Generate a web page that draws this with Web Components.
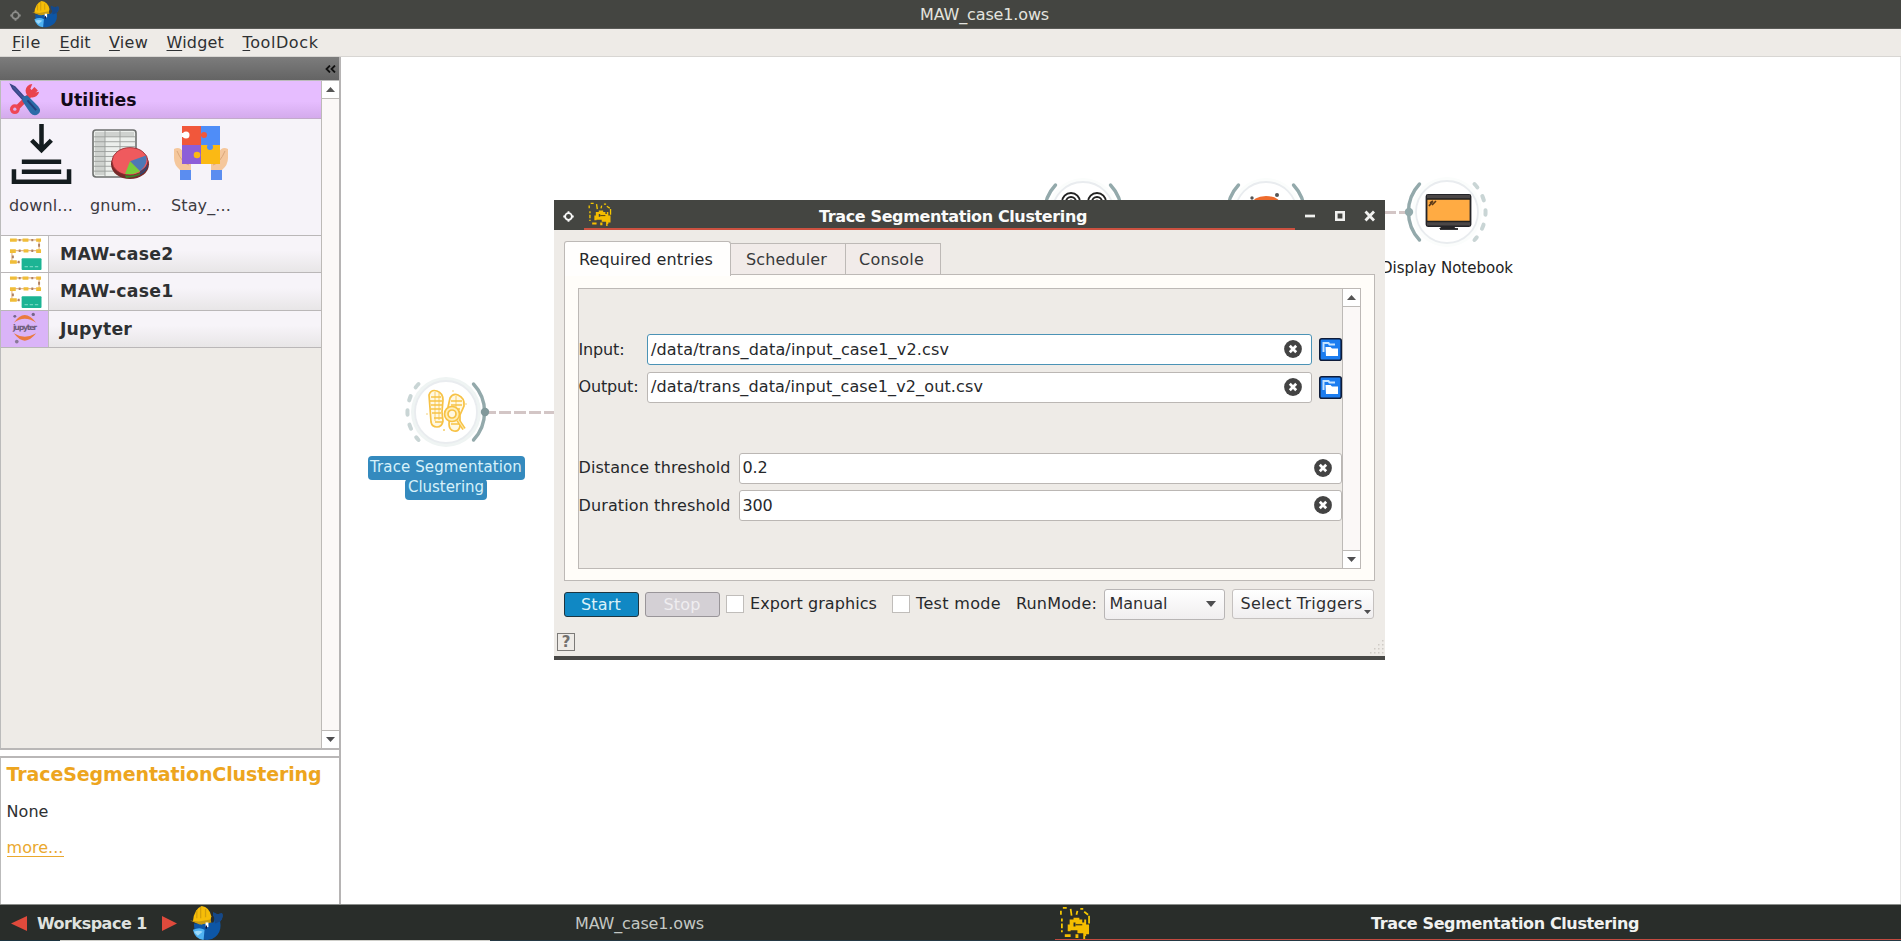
<!DOCTYPE html>
<html lang="en"><head><meta charset="utf-8"><title>MAW_case1.ows</title>
<style>
html,body{margin:0;height:100%;overflow:hidden}
body{font:16px/20px "DejaVu Sans",sans-serif;color:#2e3032;background:#fff}
</style></head><body>
<app-window></app-window>
<script>
const define=(name,css,html,setup)=>customElements.define(name,class extends HTMLElement{
  connectedCallback(){
    if(this.shadowRoot)return;
    const root=this.attachShadow({mode:'open'});
    const t=document.createElement('template');
    t.innerHTML=`<style>*{box-sizing:border-box}:host{box-sizing:border-box}${css}</style>${typeof html==='function'?html(this):html}`;
    root.append(t.content.cloneNode(true));
    if(setup)setup(this,root);
  }
});

/* One line of text, tracked so that it takes exactly w pixels. */
define('fit-text',`:host{display:inline-block;white-space:pre;flex:none}`,
  `<span><slot></slot></span>`,(el,root)=>{
    const w=+el.getAttribute('w');if(!w)return;
    const s=root.querySelector('span'),n=el.textContent.length;
    s.style.letterSpacing=((w-s.getBoundingClientRect().width)/n)+'px';
    el.style.width=w+'px';
  });

const pictures={
whale:['0 0 34 34',`<path d="M4 17l20-1q2-3 1-5-2-2-1-5l4 2 5-1q2 4-2 8 2 10-5 15-6 5-14 2-8-3-8-15z" fill="#0d56a6"/><path d="M24 6l4 2 5-1q2 4-2 8l-5 2q-1-3-1-6-2-2-1-5z" fill="#164888"/><path d="M3 23q7-3 12 0l-1 10Q5 32 3 23z" fill="#4fb2f2"/><path d="M4 25q5-2 9 0l-5 4z" fill="#9bdafb"/><path d="M3 15Q4 3 12 0q8 1 10 10l-1 5-9 3z" fill="#f6bd08"/><path d="M0 14l9 1 12-2 1 3-12 2z" fill="#c69a14"/><path d="M11 1v11M7 4v8M16 3v8" stroke="#d39f0c" stroke-width="1.3"/><rect x="16" y="16" width="3" height="4.500" fill="#fff"/><rect x="16" y="19" width="1.500" height="3" fill="#113"/>`],
prints:['0 0 34 34',`<g fill="none" stroke="#f6c800" stroke-width="1.800"><path d="M3 9V5M5 2h4M13 3l1 7M19 9l1-4M23 3h3M27 6l4 3M32 10v8M4 13v3M4 18v5M4 25v2"/></g><path d="M12 14h4v-2h6v2h3v3h-9v6h-3v3h-3v-7h2zM18 17h9v-3h2v5h3v10h-3v2h-3v-3h-6v-3h-8v-4h6zM7 29h6v3H7zM18 29h3v4h-3zM26 31h2v3h-2z" fill="#f5bd00"/><path d="M18 18.500h7v1.500h-7z" fill="#5c4a12"/>`],
tools:['0 0 34 34',`<path d="M5 29L28 6" stroke="#e8434f" stroke-width="5"/><circle cx="6" cy="27" r="5" fill="#ef4655"/><circle cx="6" cy="27" r="1.700" fill="#dcb0ee"/><path d="M31 9a7 7 0 1 1-7-8l-2 5 4 4z" fill="#e9424e"/><path d="M2 2l4 2 11 12-2 2L4 6z" fill="#45569c" stroke="#3b4787" stroke-width="1.500"/><path d="M14 14l5-1 11 11q4 5 0 8-4 3-8-1L14 19z" fill="#2c6ba8"/><path d="M19 18l9 10" stroke="#263f7d" stroke-width="2"/>`],
download:['0 0 62 62',`<g fill="none" stroke="#141c1f" stroke-width="4.600"><path d="M31 0v26M21 16.500l10 10L41 16.500M11 38.300h40M11 48.500h40M3 46v12.800h56V46"/></g>`],
sheet:['0 0 58 52',`<rect x="1" y="2" width="43" height="48" rx="3" fill="#ecefec" stroke="#6e706f" stroke-width="1.600"/><path d="M3 4h39v5H3zM3 4h10v44H3z" fill="#cfd2cf"/><path d="M2 9h41M2 14h41M2 19h41M2 24h41M2 29h41M2 34h41M2 39h41M2 44h41M13 3v46M28 3v46" stroke="#9a9d9b" stroke-width=".9"/><ellipse cx="38" cy="37" rx="19" ry="15" fill="#752a2a"/><ellipse cx="38" cy="34" rx="18" ry="14" fill="#ef5a5e"/><path d="M38 34L54 28q3 8-6 16z" fill="#4d78b5"/><path d="M38 34l10 10q-7 4-15 3z" fill="#78cc3c"/><path d="M33 48q8 1 15-3v3q-7 3-14 3z" fill="#3b8429"/><path d="M48 44q7-4 8-10v5q-2 6-8 9z" fill="#274877"/><ellipse cx="38" cy="34" rx="18" ry="14" fill="none" stroke="#90262d" stroke-width=".8"/>`],
puzzle:['0 0 56 56',`<path d="M1 24q6-3 9 3l8 8v10H7Q1 40 1 33zM55 24q-6-3-9 3l-8 8v10h11q6-5 6-12z" fill="#f5c79c"/><path d="M4 26q5 12 12 14M52 26q-5 12-12 14" stroke="#dba77b" fill="none"/><path d="M7 45h11v10H7zM38 45h11v10H38z" fill="#5b8df0"/><path d="M9 1h19v19H9z" fill="#f1573b"/><path d="M28 1h19v19H28z" fill="#4f8df8"/><path d="M9 20h19v19H9z" fill="#8d5ed8"/><path d="M28 20h19v19H28z" fill="#fbb914"/><circle cx="31" cy="10" r="3" fill="#f1573b"/><circle cx="37" cy="22" r="3" fill="#4f8df8"/><circle cx="24" cy="30" r="3.300" fill="#fbb914"/><circle cx="13" cy="10" r="3.500" fill="#fff"/><path d="M9 8h3v4H9z" fill="#fff"/>`],
flow:['0 0 34 34',`<path d="M1 3h30v11H3v12h8" fill="none" stroke="#e8b98a" stroke-width="1.200"/><g fill="#f0bd38"><path d="M1 1.500h7v3.500H1zM14 1.500h6v3.500h-6zM28 1.500h5v3.500h-5zM1 12.500h6v4H1zM15 12.500h5v3.500h-5zM28 12.500h5v4h-5zM1 24h7v3.500H1z"/></g><g fill="#ad8064"><path d="M10 2h2v2.500h-2zM23 2h2v2.500h-2zM30 7h2v3h-2zM23 13h2v2.500h-2zM10 13h2v2.500h-2zM3 19h2v3H3zM9 24.500h2v2.500H9z"/></g><rect x="13" y="22" width="20.500" height="12" rx="1" fill="#1cb494"/><path d="M16 30.500h15" stroke="#70d5bf" stroke-width="1.500" stroke-dasharray="3.500 1.800"/>`],
jupyter:['0 0 34 34',`<path d="M5 11Q16-5 28 11 16 3 5 11M5 22q11 15 23 0-12 7-23 0" fill="#ea7b40"/><circle cx="6" cy="4.500" r="1.500" fill="#75658a"/><circle cx="25" cy="2.500" r="1.700" fill="#75658a"/><circle cx="8" cy="30.500" r="1.900" fill="#8a7998"/><text x="4" y="18.500" font-size="8" textLength="25" font-family="DejaVu Sans" fill="#6d5c7b">jupyter</text>`],
up:['0 0 10 6','<path d="M0 6L5 0l5 6z" fill="#555"/>'],
down:['0 0 10 6','<path d="M0 0h10L5 6z" fill="#4e4e50"/>'],
clear:['0 0 18 18','<circle cx="9" cy="9" r="8.900" fill="#434343"/><path d="M5.800 5.800l6.400 6.400M12.200 5.800l-6.400 6.400" stroke="#fff" stroke-width="2.700"/>'],
folder:['0 0 23 23','<rect x=".8" y=".8" width="21.400" height="21.400" rx="2" fill="#1c7df0" stroke="#0e1c3a" stroke-width="1.600"/><path d="M4.500 14V5h5l1 1.500H16" fill="none" stroke="#c4e2ff" stroke-width="2"/><path d="M6.500 9h5l1.500 1.500h6V18h-12z" fill="#fff"/>'],
gear:['0 0 12 12','<circle cx="6" cy="6" r="3.700" fill="none" stroke="currentColor" stroke-width="2"/><path d="M6 .3v2M6 9.700v2M.3 6h2M9.700 6h2" stroke="currentColor" stroke-width="2"/>'],
controls:['0 0 70 12','<path d="M0 6h10" stroke="#f1f1ef" stroke-width="2.700"/><path d="M31.300 2.300h7.400v7.400h-7.400z" fill="none" stroke="#f1f1ef" stroke-width="2.600"/><path d="M60.500 1.500l8.500 9M69 1.500l-8.500 9" stroke="#f1f1ef" stroke-width="2.800"/>'],
collapse:['0 0 11 8','<path d="M5 .5L1.500 4 5 7.500M10 .5L6.500 4 10 7.500" fill="none" stroke="#111" stroke-width="1.800"/>'],
grip:['0 0 14 14','<g fill="#cfcbc6"><path d="M12 0h1.500v1.500h-1.500zM12 4h1.500v1.500h-1.500zM8 4h1.500v1.500H8zM12 8h1.500v1.500h-1.500zM8 8h1.500v1.500H8zM4 8h1.500v1.500H4zM12 12h1.500v1.500h-1.500zM8 12h1.500v1.500H8zM4 12h1.500v1.500H4zM0 12h1.500v1.500H0z"/></g>'],
prev:['0 0 16 15','<path d="M16 0v15L0 7.500z" fill="#df4a3c"/>'],
next:['0 0 16 15','<path d="M0 0v15l16-7.500z" fill="#df4a3c"/>']
};
define('ui-icon',`:host{display:block;flex:none}svg{display:block;width:100%;height:100%}`,
  el=>{const p=pictures[el.getAttribute('name')];return `<svg viewBox="${p[0]}" preserveAspectRatio="none">${p[1]}</svg>`},
  el=>{el.style.width=el.getAttribute('w')+'px';el.style.height=el.getAttribute('h')+'px'});

define('title-bar',`:host{display:flex;height:29px;background:#444541;color:#e3e3df;align-items:center;padding-left:10px;border-bottom:1px solid #5a5a57}
 .g{color:#8d8d8a;margin-right:11px;margin-top:2px}fit-text{margin-left:861px;position:relative;top:1px}`,
 `<ui-icon class="g" name="gear" w="11" h="11"></ui-icon><ui-icon name="whale" w="27" h="27"></ui-icon><fit-text w="129">MAW_case1.ows</fit-text>`);

define('menu-bar',`:host{display:flex;height:28px;background:#eeebe7;border-bottom:1px solid #d8d6d3;padding:4px 0 0 12px}
 fit-text{margin-right:18.500px}u{text-decoration-thickness:1px;text-underline-offset:2px;text-decoration-skip-ink:none}`,
 `<fit-text w="29"><u>F</u>ile</fit-text><fit-text w="31"><u>E</u>dit</fit-text><fit-text w="39"><u>V</u>iew</fit-text><fit-text w="57.500"><u>W</u>idget</fit-text><fit-text w="76"><u>T</u>oolDock</fit-text>`);

define('scroll-bar',`:host{display:flex;flex-direction:column;justify-content:space-between;width:18px;background:#fbf8f7;border-left:1px solid #bdbab7;flex:none}
 div{height:18px;background:#fff;display:grid;place-items:center}.a{border-bottom:1px solid #bdbab7}.b{border-top:1px solid #bdbab7}`,
 `<div class="a"><ui-icon name="up" w="9" h="5"></ui-icon></div><div class="b"><ui-icon name="down" w="9" h="5"></ui-icon></div>`);

define('tool-section',`:host{display:flex;height:37.500px;border-bottom:1px solid #bab7b8;background:linear-gradient(#f7f4f9 40%,#e8e6e7);font-weight:bold;font-size:17.300px;align-items:center}
 :host([open]){height:38px;background:linear-gradient(#e6bdff 55%,#d4abec);border-color:#c3aacb;color:#120a18}
 .i{width:48px;height:100%;display:flex;align-items:center;padding-left:8px;border-right:1px solid #c1bec0;margin-right:11px;background:#fff}
 :host([open]) .i{background:none;border:0}:host([violet]) .i{background:#dab4f8}`,
 el=>`<div class="i"><ui-icon name="${el.getAttribute('icon')}" w="33" h="33"></ui-icon></div><slot></slot>`);

define('tool-item',`:host{display:flex;flex-direction:column;align-items:center;width:80px}
 div{height:76px;display:flex;align-items:center;padding-bottom:var(--lift,4px)}`,
 el=>`<div><ui-icon name="${el.getAttribute('icon')}" w="${el.getAttribute('w')}" h="${el.getAttribute('h')}"></ui-icon></div><slot></slot>`);

define('tool-dock',`:host{display:flex;flex-direction:column;width:341px;flex:none;border-right:2px solid #b6b4b4;background:#fff}
 header{height:24px;background:linear-gradient(#7c7c7c,#646464);display:flex;align-items:center;justify-content:flex-end;padding-right:3px;border-bottom:1px solid #bbb}
 .box{height:669px;display:flex;background:#eeebe7;border-left:1px solid #bbb;border-bottom:2px solid #b9b7b7}
 .list{flex:1}.items{display:flex;height:116.500px;background:#f6f3f9;border-bottom:1px solid #bab7b8}.items fit-text{margin-top:1px}
 .info{flex:1;margin-top:6px;border-top:2px solid #b9b7b7;border-left:1px solid #bbb;padding-left:5.500px;display:flex;flex-direction:column;align-items:flex-start}
 .t{color:#eda51e;font-weight:bold;font-size:19px;margin-top:6px}.n{margin-top:17.500px}.m{margin-top:16px;color:#eaa82e;border-bottom:1px solid #eaa82e;height:19px}
 tool-item{color:#3d3b42}`,
 `<header><ui-icon name="collapse" w="11" h="8"></ui-icon></header>
 <div class="box"><div class="list">
  <tool-section open icon="tools"><fit-text w="76.500">Utilities</fit-text></tool-section>
  <div class="items"><tool-item icon="download" w="61" h="61" style="--lift:6px"><fit-text w="64">downl...</fit-text></tool-item><tool-item icon="sheet" w="58" h="51" style="--lift:7px"><fit-text w="62">gnum...</fit-text></tool-item><tool-item icon="puzzle" w="56" h="56" style="--lift:8px"><fit-text w="60">Stay_...</fit-text></tool-item></div>
  <tool-section icon="flow"><fit-text w="113.500">MAW-case2</fit-text></tool-section>
  <tool-section icon="flow"><fit-text w="113.500">MAW-case1</fit-text></tool-section>
  <tool-section violet icon="jupyter"><fit-text w="72">Jupyter</fit-text></tool-section>
 </div><scroll-bar></scroll-bar></div>
 <div class="info"><fit-text class="t" w="315">TraceSegmentationClustering</fit-text><fit-text class="n" w="42">None</fit-text><fit-text class="m" w="57">more...</fit-text></div>`);

/* Nodes and links lie on a free canvas, in its own coordinates (origin 341,57). */
const arc=(s,dash)=>`<path d="M${s*27.500}-28A41 41 0 0 ${s>0?1:0} ${s*27.500} 28" fill="none" stroke="${dash?'#c9d5d5':'#93a9ab'}" stroke-width="${dash?4:3.400}" stroke-linecap="round" ${dash?'stroke-dasharray="4.500 10"':''}/>`;
const glyphs={
 prints:`<g transform="translate(-1,-1)" fill="#fff8e2" stroke="#f7c245" stroke-width="1.700"><path d="M-16-16q2-6 8-4 6 2 6 9l-1 12 1 9q-1 6-6 6-5 0-6-5l-1-14z"/><path d="M5-13q3-5 8-3 7 3 6 11l-4 9 0 11q-1 6-6 5-5-1-5-7l1-10-2-7z"/><path d="M-14-14h10M-15-10h12M-14-6h11M-14-2h10M-13 2h9M-11 7h8M-10 11h7M6-10h11M6-6h11M6-2h9M6 13h8" stroke-width="1.400"/><path d="M-10-19v29M-6-18v27M11-15V3" stroke-width=".8"/><circle cx="7" cy="3" r="7.500" fill="#ffeeb8"/><circle cx="7" cy="3" r="4"/><path d="M13 9l6 9" stroke-width="4"/><path d="M13 9l6 9" stroke="#ffe9a8" stroke-width="1.200"/></g><g fill="#f3cc67"><circle cx="-19" cy="2" r=".8"/><circle cx="7" cy="-21" r=".8"/><circle cx="-2" cy="18" r="1"/><circle cx="20" cy="-8" r=".8"/></g>`,
 eyes:`<g fill="none" stroke="#222" stroke-width="2"><circle cx="-12" cy="-11" r="9"/><circle cx="-12" cy="-11" r="5"/><circle cx="14" cy="-11" r="9"/><circle cx="14" cy="-11" r="5"/></g><circle cx="-12" cy="-11" r="2.500" fill="#222"/><circle cx="14" cy="-11" r="2.500" fill="#654"/>`,
 jup:`<path d="M-16-7Q-13-17 0-17T16-7z" fill="#ee6b2d"/><circle cx="-14" cy="-15" r="1.700" fill="#555"/><circle cx="11" cy="-18" r="2" fill="#555"/>`,
 monitor:`<path d="M-4 13H6l3 4H-8z" fill="#272627"/><rect x="-20.500" y="-17" width="44" height="31" rx="1.500" fill="#ffab43" stroke="#242428" stroke-width="1.800"/><path d="M-20-17h43v4h-43zM-20 10h43v3.500h-43z" fill="#4b4747"/><path d="M-20-13h43M-20 9.500h43" stroke="#222" stroke-width="1.400"/><path d="M-18-6l4-5M-17-9l3-2M-15-7l4-4" stroke="#5a3817" stroke-width="1.700"/><path d="M-7 17H11" stroke="#242428" stroke-width="1.800"/>`};
define('flow-node',`:host{position:absolute;left:calc(var(--x)*1px);top:calc(var(--y)*1px);width:200px;height:110px;margin:-50px 0 0 -100px}
 svg{display:block;width:200px;height:100px}.l{display:flex;flex-direction:column;align-items:center;font-size:15px;margin-top:-4px;color:#222}
 :host([selected]) .l{color:#d6f1fa;margin-top:-6px}`,
 el=>{const c=el.getAttribute('left'),r=el.getAttribute('right');
 return `<svg viewBox="-100 -50 200 100"><circle r="35" fill="${el.hasAttribute('selected')?'#eff4f3':'#fbfdfc'}"/><circle r="31" fill="#fff" stroke="#e9ecef" stroke-width="1.800"/>${arc(-1,c==='dash')}${arc(1,r==='dash')}${c==='dot'?'<circle cx="-38" r="4.200" fill="#93aaac"/>':''}${r==='dot'?'<circle cx="39" r="4.200" fill="#82999b"/>':''}${glyphs[el.getAttribute('glyph')]}</svg><div class="l"><slot></slot></div>`});

define('flow-canvas',`:host{display:block;position:relative;flex:1;background:#fff;overflow:hidden;border-right:1px solid #e3e3e3}
 .k{position:absolute;height:3px;background:repeating-linear-gradient(90deg,#d3c6c6 0 12px,transparent 12px 15px)}
 .a{left:143px;top:353.500px;width:72px}.b{left:1028px;top:153.500px;width:38px}
 .p{background:#348abe;border-radius:4px;text-align:center}.p1{width:157px;height:24px;line-height:23px}.p2{width:82px;height:21px;line-height:16px;margin-top:-1px}.p fit-text{line-height:inherit}`,
 `<div class="k a"></div><div class="k b"></div>
 <flow-node selected glyph="prints" left="dash" right="dot" style="--x:105;--y:355"><div class="p p1"><fit-text w="152">Trace Segmentation</fit-text></div><div class="p p2"><fit-text w="76">Clustering</fit-text></div></flow-node>
 <flow-node glyph="eyes" left="s" right="s" style="--x:742;--y:156"></flow-node>
 <flow-node glyph="jup" left="s" right="s" style="--x:924.5;--y:156"></flow-node>
 <flow-node glyph="monitor" left="dot" right="dash" style="--x:1106;--y:155"><fit-text w="132">Display Notebook</fit-text></flow-node>`);

define('entry-field',`:host{display:flex;align-items:center;height:31px;color:#26282b}
 .f{flex:1;height:31px;background:#fff;border:1.500px solid #bbb7b4;border-radius:3px;display:flex;align-items:center;justify-content:space-between;padding:0 9px 0 3px}
 :host([focus]) .f{border-color:#4b93b6}.b{margin-left:7px}.f ui-icon{margin-top:-1px}`,
 el=>{const a=n=>el.getAttribute(n);return `<fit-text w="${a('lw')}">${a('label')}</fit-text><div class="f" style="margin-left:${a('gap')}px"><fit-text w="${a('vw')}">${a('value')}</fit-text><ui-icon name="clear" w="18" h="18"></ui-icon></div>${el.hasAttribute('browse')?'<ui-icon class="b" name="folder" w="23" h="23"></ui-icon>':''}`});

define('tab-strip',`:host{display:flex;align-items:flex-end;height:34px;margin-bottom:-1px;position:relative}
 div{height:32px;border:1px solid #bdb9b6;border-left:0;background:#f1ebe9;display:flex;align-items:center;justify-content:center;color:#37393b;padding:2px 2px 0 0}
 .on{height:35px;width:167px;background:#fffefd;border:1px solid #bdb9b6;border-bottom:0;border-radius:3px 3px 0 0;color:#26282b;margin-bottom:-1px}`,
 `<div class="on"><fit-text w="134">Required entries</fit-text></div><div style="width:115px"><fit-text w="81">Scheduler</fit-text></div><div style="width:95px"><fit-text w="65">Console</fit-text></div>`);

define('run-bar',`:host{display:flex;align-items:center;height:32px;color:#26282b}
 .b{width:75px;height:25px;border:1.500px solid #1d3540;border-radius:3px;background:#1088c4;color:#dcf1f8;display:flex;align-items:center;justify-content:center;margin-right:6px;padding-top:1px}
 .off{background:#d4d0d5;border-color:#999599;color:#efedf0}
 .c{width:18px;height:18px;border:1.500px solid #c0bdba;background:#fff;margin-right:6.500px}
 .s{height:31px;width:121px;border:1.500px solid #b8b5b5;border-radius:3px;background:linear-gradient(#fff,#f0eeef);display:flex;align-items:center;justify-content:space-between;padding:0 8px 0 5px;color:#2e2f31}
 .t{height:30px;width:142px;margin-left:7px;padding:0 2px 0 8px;border-color:#c5c1bf}.t ui-icon{margin-top:15px}`,
 `<div class="b"><fit-text w="40">Start</fit-text></div><div class="b off"><fit-text w="37">Stop</fit-text></div><i class="c"></i><fit-text w="127">Export graphics</fit-text><i class="c" style="margin-left:14.500px"></i><fit-text w="85">Test mode</fit-text><fit-text w="81" style="margin-left:15px">RunMode:</fit-text><div class="s" style="margin-left:6.500px"><fit-text w="58">Manual</fit-text><ui-icon name="down" w="10" h="6"></ui-icon></div><div class="s t"><fit-text w="122">Select Triggers</fit-text><ui-icon name="down" w="7" h="4"></ui-icon></div>`);

define('widget-dialog',`:host{display:flex;flex-direction:column;position:absolute;left:554px;top:200px;width:831px;height:459.500px;background:#eeebe7;border-bottom:4px solid #484846}
 header{height:30px;background:#444541;color:#fafafa;display:flex;align-items:center;padding:0 8px 0 9px;flex:none;font-weight:bold}
 .u{display:flex;align-items:center;width:711px;height:30px;margin-left:10px;border-bottom:2.500px solid #cc5140;padding-left:3px}
 .u fit-text{margin-left:207px;position:relative;top:2.500px}.ctl{margin-left:10px;margin-top:2px}
 header>ui-icon{margin-top:2px}
 .body{margin:11px 10px 0 9.500px}.pane{height:307px;background:#fffdf9;border:1px solid #bdb9b6;padding:13px 13px 12px 13px}
 .area{height:281px;border:1px solid #bdb9b6;background:#eeebe7;display:flex}.form{flex:1;padding-top:45px;display:flex;flex-direction:column;gap:6.500px}
 .form .gap{margin-top:43.500px}
 footer{display:flex;justify-content:space-between;align-items:flex-start;padding:13px 1px 0 3px}
 .q{width:18px;height:18px;border:1.500px solid #7c7a78;color:#72706e;display:grid;place-items:center;font-size:15px;line-height:15px;font-weight:bold}`,
 `<header><ui-icon name="gear" w="11" h="11"></ui-icon><div class="u"><ui-icon name="prints" w="25" h="24"></ui-icon><fit-text w="268">Trace Segmentation Clustering</fit-text></div><ui-icon class="ctl" name="controls" w="70" h="12"></ui-icon></header>
 <div class="body"><tab-strip></tab-strip><div class="pane"><div class="area"><div class="form">
 <entry-field focus browse label="Input:" lw="46" gap="22.5" value="/data/trans_data/input_case1_v2.csv" vw="298"></entry-field>
 <entry-field browse label="Output:" lw="60" gap="8.5" value="/data/trans_data/input_case1_v2_out.csv" vw="332"></entry-field>
 <entry-field class="gap" label="Distance threshold" lw="152" gap="8" value="0.2" vw="25"></entry-field>
 <entry-field label="Duration threshold" lw="152" gap="8" value="300" vw="30"></entry-field>
 </div><scroll-bar></scroll-bar></div></div>
 <run-bar style="margin-top:7px"></run-bar></div>
 <footer><div class="q">?</div><ui-icon name="grip" w="14" h="14" style="margin-top:7px"></ui-icon></footer>`);

define('task-bar',`:host{display:flex;height:37px;background:#292d2a;color:#c4c8c4;border-top:1px solid #8b8e8b;flex:none;position:relative;padding-left:11px}
 .x{display:flex;align-items:center;height:36px}.x fit-text{position:relative;top:1px}.w{font-weight:bold;color:#dfe2df;margin:0 15px 0 10px}
 .cur{flex:1;border-bottom:2px solid #c34a40;padding-left:3px;color:#f0f1f0;font-weight:bold;margin-left:351px}.cur fit-text{top:2px}
 .e{position:absolute;left:0;right:0;bottom:0;height:1px;background:linear-gradient(90deg,#1c3440 0 60px,#cfcfca 60px 490px,#243843 490px)}`,
 `<div class="x"><ui-icon name="prev" w="16" h="15"></ui-icon><fit-text class="w" w="110">Workspace 1</fit-text><ui-icon name="next" w="15" h="15"></ui-icon><ui-icon name="whale" w="33" h="35" style="margin-left:13px"></ui-icon><fit-text w="129" style="margin-left:352px">MAW_case1.ows</fit-text></div><div class="e"></div><div class="x cur"><ui-icon name="prints" w="33" h="33"></ui-icon><fit-text w="268" style="margin-left:280px">Trace Segmentation Clustering</fit-text></div>`);

define('app-window',`:host{display:flex;flex-direction:column;width:1901px;height:941px;position:relative;overflow:hidden}
 main{flex:1;display:flex;min-height:0}`,
 `<title-bar></title-bar><menu-bar></menu-bar><main><tool-dock></tool-dock><flow-canvas></flow-canvas></main><task-bar></task-bar><widget-dialog></widget-dialog>`);
</script></body></html>
